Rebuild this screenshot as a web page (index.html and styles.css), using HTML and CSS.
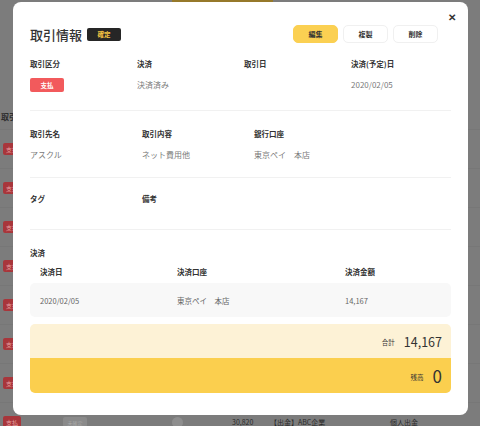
FILE: index.html
```html
<!DOCTYPE html>
<html lang="ja">

<head>
    <meta charset="UTF-8">
    <meta name="viewport" content="width=device-width,initial-scale=1.0">
    <title>取引情報</title>
    <link rel="stylesheet" href="styles.css">
</head>

<body>
    <div class="screen">
        <!-- dimmed page behind the modal -->
        <div class="page">
            <div class="topbar"><span class="topbtn"></span></div>
            <div class="list-head">取引</div>
            <div class="list">
                <div class="list-row"><span class="pay">支払</span></div>
                <div class="list-row"><span class="pay">支払</span></div>
                <div class="list-row"><span class="pay">支払</span></div>
                <div class="list-row"><span class="pay">支払</span></div>
                <div class="list-row"><span class="pay">支払</span></div>
                <div class="list-row"><span class="pay">支払</span></div>
                <div class="list-row"><span class="pay">支払</span></div>
                <div class="list-row last">
                    <span class="pay">支払</span>
                    <span class="pending">未確定</span>
                    <span class="dot"></span>
                    <span class="amount">30,820</span>
                    <span class="memo">【出金】ABC企業</span>
                    <span class="kind">個人出金</span>
                </div>
            </div>
        </div>

        <!-- modal -->
        <section class="modal">
            <span class="close">✕</span>
            <div class="modal-head">
                <div class="heading">
                    <h1 class="title">取引情報</h1>
                    <span class="state">確定</span>
                </div>
                <div class="actions">
                    <button class="btn primary">編集</button>
                    <button class="btn">複製</button>
                    <button class="btn">削除</button>
                </div>
            </div>

            <div class="info info-1">
                <div class="field">
                    <p class="label">取引区分</p>
                    <span class="pay-tag">支払</span>
                </div>
                <div class="field">
                    <p class="label">決済</p>
                    <p class="value">決済済み</p>
                </div>
                <div class="field">
                    <p class="label">取引日</p>
                    <p class="value"></p>
                </div>
                <div class="field">
                    <p class="label">決済(予定)日</p>
                    <p class="value">2020/02/05</p>
                </div>
            </div>

            <div class="info info-2">
                <div class="field">
                    <p class="label">取引先名</p>
                    <p class="value">アスクル</p>
                </div>
                <div class="field">
                    <p class="label">取引内容</p>
                    <p class="value">ネット費用他</p>
                </div>
                <div class="field">
                    <p class="label">銀行口座</p>
                    <p class="value">東京ペイ　本店</p>
                </div>
            </div>

            <div class="info info-3">
                <div class="field">
                    <p class="label">タグ</p>
                    <p class="value"></p>
                </div>
                <div class="field">
                    <p class="label">備考</p>
                    <p class="value"></p>
                </div>
            </div>

            <div class="payments">
                <p class="label">決済</p>
                <div class="pay-grid pay-head">
                    <span>決済日</span>
                    <span>決済口座</span>
                    <span>決済金額</span>
                </div>
                <div class="pay-grid pay-row">
                    <span>2020/02/05</span>
                    <span>東京ペイ　本店</span>
                    <span>14,167</span>
                </div>
                <div class="totals">
                    <div class="total sum">
                        <span class="t-label">合計</span>
                        <span class="t-num">14,167</span>
                    </div>
                    <div class="total rest">
                        <span class="t-label">残高</span>
                        <span class="t-num big">0</span>
                    </div>
                </div>
            </div>
        </section>
    </div>
</body>

</html>
```

FILE: styles.css
```css
* {
    padding: 0;
    margin: 0;
    box-sizing: border-box;
    font-family: "Noto Sans CJK JP", "Noto Sans", sans-serif;
}

body {
    background: #7c7c7c;
}

.screen {
    position: relative;
    width: 480px;
    height: 426px;
    overflow: hidden;
    background: #7c7c7c;
}

/* page behind the overlay */
.topbar {
    height: 2px;
    display: flex;
}

.topbtn {
    margin-left: 172px;
    width: 101px;
    background: #96792a;
}

.list-head {
    margin-top: 101px;
    height: 26px;
    padding-left: 1px;
    font-size: 8px;
    font-weight: bold;
    color: #2e2e2e;
    display: flex;
    align-items: center;
}

.list-row {
    height: 39px;
    display: flex;
    align-items: center;
    border-top: 1px solid #777;
    padding-left: 3px;
    font-size: 7px;
    color: #2a2a2a;
}

.pay {
    width: 18px;
    height: 12px;
    border-radius: 2px;
    background: #a8363b;
    color: #e8a3a3;
    font-size: 6px;
    display: grid;
    place-items: center;
}

.pending {
    margin-left: 42px;
    width: 24px;
    height: 10px;
    border-radius: 2px;
    background: #8a8a8a;
    color: #a8a8a8;
    font-size: 5px;
    display: grid;
    place-items: center;
}

.dot {
    margin-left: 85px;
    width: 11px;
    height: 11px;
    border-radius: 50%;
    background: #8e8e8e;
}

.amount {
    margin-left: 49px;
    width: 38px;
}

.memo {
    width: 120px;
}

/* modal */
.modal {
    position: absolute;
    left: 13px;
    top: 2px;
    width: 455px;
    height: 413px;
    background: #fff;
    border-radius: 8px;
    padding: 0 17px;
}

.close {
    position: absolute;
    right: 12px;
    top: 7px;
    font-size: 10px;
    font-weight: bold;
    color: #333;
}

.modal-head {
    display: flex;
    justify-content: space-between;
    align-items: center;
    padding-top: 23px;
    height: 41px;
}

.heading {
    display: flex;
    align-items: center;
}

.title {
    font-size: 13px;
    font-weight: 500;
    color: #333;
}

.state {
    margin-left: 5px;
    width: 34px;
    height: 13px;
    border-radius: 2px;
    background: #262626;
    color: #f6c343;
    font-size: 6.5px;
    font-weight: bold;
    display: grid;
    place-items: center;
}

.actions {
    display: flex;
    gap: 5px;
    margin-right: 13px;
}

.btn {
    width: 45px;
    height: 18px;
    border-radius: 5px;
    border: 1px solid #f0f0f0;
    background: #fff;
    color: #333;
    font-size: 7px;
    font-weight: bold;
}

.btn.primary {
    background: #fbd052;
    border-color: #fbd052;
}

/* info rows */
.info {
    display: grid;
    border-bottom: 1px solid #f1f1f1;
}

.info-1 {
    grid-template-columns: 107px 107px 107px 1fr;
    padding: 15px 0 18px;
}

.info-2 {
    grid-template-columns: 112px 112px 1fr;
    padding: 17px 0 16px;
}

.info-3 {
    grid-template-columns: 112px 1fr;
    padding: 15px 0 3px;
}

.label {
    font-size: 7.5px;
    line-height: 12px;
    font-weight: bold;
    color: #333;
}

.value {
    margin-top: 8px;
    height: 13px;
    line-height: 13px;
    font-size: 8px;
    color: #7a7a7a;
}

.pay-tag {
    margin-top: 8px;
    width: 34px;
    height: 14px;
    border-radius: 2px;
    background: #f25a5c;
    color: #fff;
    font-size: 6.5px;
    font-weight: bold;
    display: grid;
    place-items: center;
}

/* payments */
.payments {
    padding-top: 17px;
}

.pay-grid {
    display: grid;
    grid-template-columns: 137px 168px 1fr;
    padding-left: 10px;
    font-size: 7.5px;
}

.pay-head {
    margin-top: 7px;
    line-height: 12px;
    font-weight: bold;
    color: #333;
}

.pay-row {
    margin-top: 5px;
    height: 34px;
    align-items: center;
    background: #f8f8f8;
    border-radius: 5px;
    color: #666;
}

.totals {
    margin-top: 7px;
    border-radius: 5px;
    overflow: hidden;
}

.total {
    display: flex;
    justify-content: flex-end;
    align-items: center;
    padding-right: 9px;
    color: #333;
}

.sum {
    height: 34px;
    background: #fdf2d6;
}

.rest {
    height: 35px;
    background: #fbcf4e;
}

.t-label {
    font-size: 6.5px;
    margin-right: 9px;
    padding-top: 2px;
}

.t-num {
    font-size: 12.5px;
}

.t-num.big {
    font-size: 17px;
}
```
